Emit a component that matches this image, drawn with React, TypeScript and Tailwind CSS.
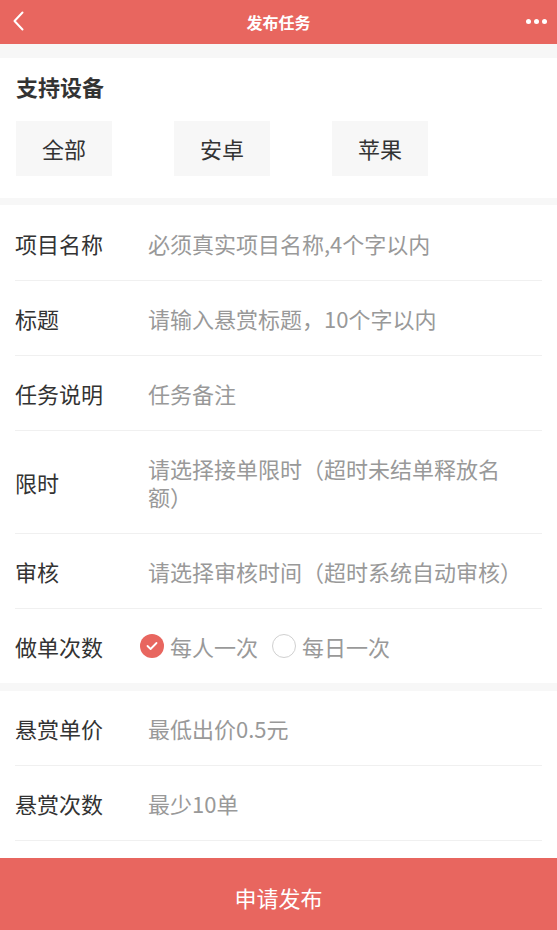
import React from "react";

const font = { fontFamily: '"Noto Sans CJK SC", "Noto Sans", sans-serif' };

function Row({ label, value, tall }: { label: string; value: React.ReactNode; tall?: boolean }) {
  return (
    <div className="mx-[15px] flex items-center border-b border-[#f0f0f0]" style={{ height: tall ? 103 : 75 }}>
      <div className="w-[133px] shrink-0 text-[22px] leading-[28px] text-[#333]">{label}</div>
      <div className="w-[385px] text-[22px] leading-[28px] text-[#999] [text-spacing-trim:space-all]">{value}</div>
    </div>
  );
}

export default function App() {
  return (
    <div className="h-[930px] overflow-hidden bg-[#f7f7f7]" style={font}>
      {/* Header */}
      <div className="relative flex h-[44px] items-center justify-center bg-[#e8665f]">
        <svg className="absolute left-[12px] top-[11px]" width="14" height="20" viewBox="0 0 14 20" fill="none">
          <path d="M10.5 1.5 L2.5 10 L10.5 18.5" stroke="#fff" strokeWidth="2" strokeLinecap="round" strokeLinejoin="round" />
        </svg>
        <div className="text-[16px] font-bold text-white">发布任务</div>
        <div className="absolute right-[10px] top-[19px] flex gap-[3px]">
          <span className="h-[5px] w-[5px] rounded-full bg-white" />
          <span className="h-[5px] w-[5px] rounded-full bg-white" />
          <span className="h-[5px] w-[5px] rounded-full bg-white" />
        </div>
      </div>

      {/* Devices */}
      <div className="mt-[14px] h-[140px] bg-white px-[16px] pt-[12px]">
        <div className="text-[22px] font-bold leading-[32px] text-[#333]">支持设备</div>
        <div className="mt-[19px] flex gap-[62px]">
          {["全部", "安卓", "苹果"].map((t) => (
            <div key={t} className="flex h-[55px] w-[96px] items-center justify-center bg-[#f7f7f7] text-[22px] text-[#333]">
              {t}
            </div>
          ))}
        </div>
      </div>

      {/* Form section 1 */}
      <div className="mt-[7px] bg-white">
        <div style={{ height: 1 }} />
        <Row label="项目名称" value="必须真实项目名称,4个字以内" />
        <Row label="标题" value="请输入悬赏标题，10个字以内" />
        <Row label="任务说明" value="任务备注" />
        <Row label="限时" value="请选择接单限时（超时未结单释放名额）" tall />
        <Row label="审核" value="请选择审核时间（超时系统自动审核）" />
        <div className="mx-[15px] flex h-[74px] items-center">
          <div className="w-[125px] shrink-0 text-[22px] leading-[28px] text-[#333]">做单次数</div>
          <div className="flex items-center text-[22px] leading-[28px] text-[#999]">
            <span className="flex h-[24px] w-[24px] items-center justify-center rounded-full bg-[#e8665f]">
              <svg width="12" height="10" viewBox="0 0 12 10" fill="none">
                <path d="M1.5 5 L4.6 8 L10.5 2" stroke="#fff" strokeWidth="1.8" strokeLinecap="round" strokeLinejoin="round" />
              </svg>
            </span>
            <span className="ml-[6px]">每人一次</span>
            <span className="ml-[14px] h-[24px] w-[24px] rounded-full border border-[#d0d0d0] bg-white" />
            <span className="ml-[6px]">每日一次</span>
          </div>
        </div>
      </div>

      {/* Form section 2 */}
      <div className="mt-[8px] bg-white pb-[17px]">
        <Row label="悬赏单价" value="最低出价0.5元" />
        <Row label="悬赏次数" value="最少10单" />
      </div>

      {/* Submit */}
      <div className="flex h-[78px] items-center justify-center bg-[#e8665f] text-[22px] text-white">申请发布</div>
    </div>
  );
}
